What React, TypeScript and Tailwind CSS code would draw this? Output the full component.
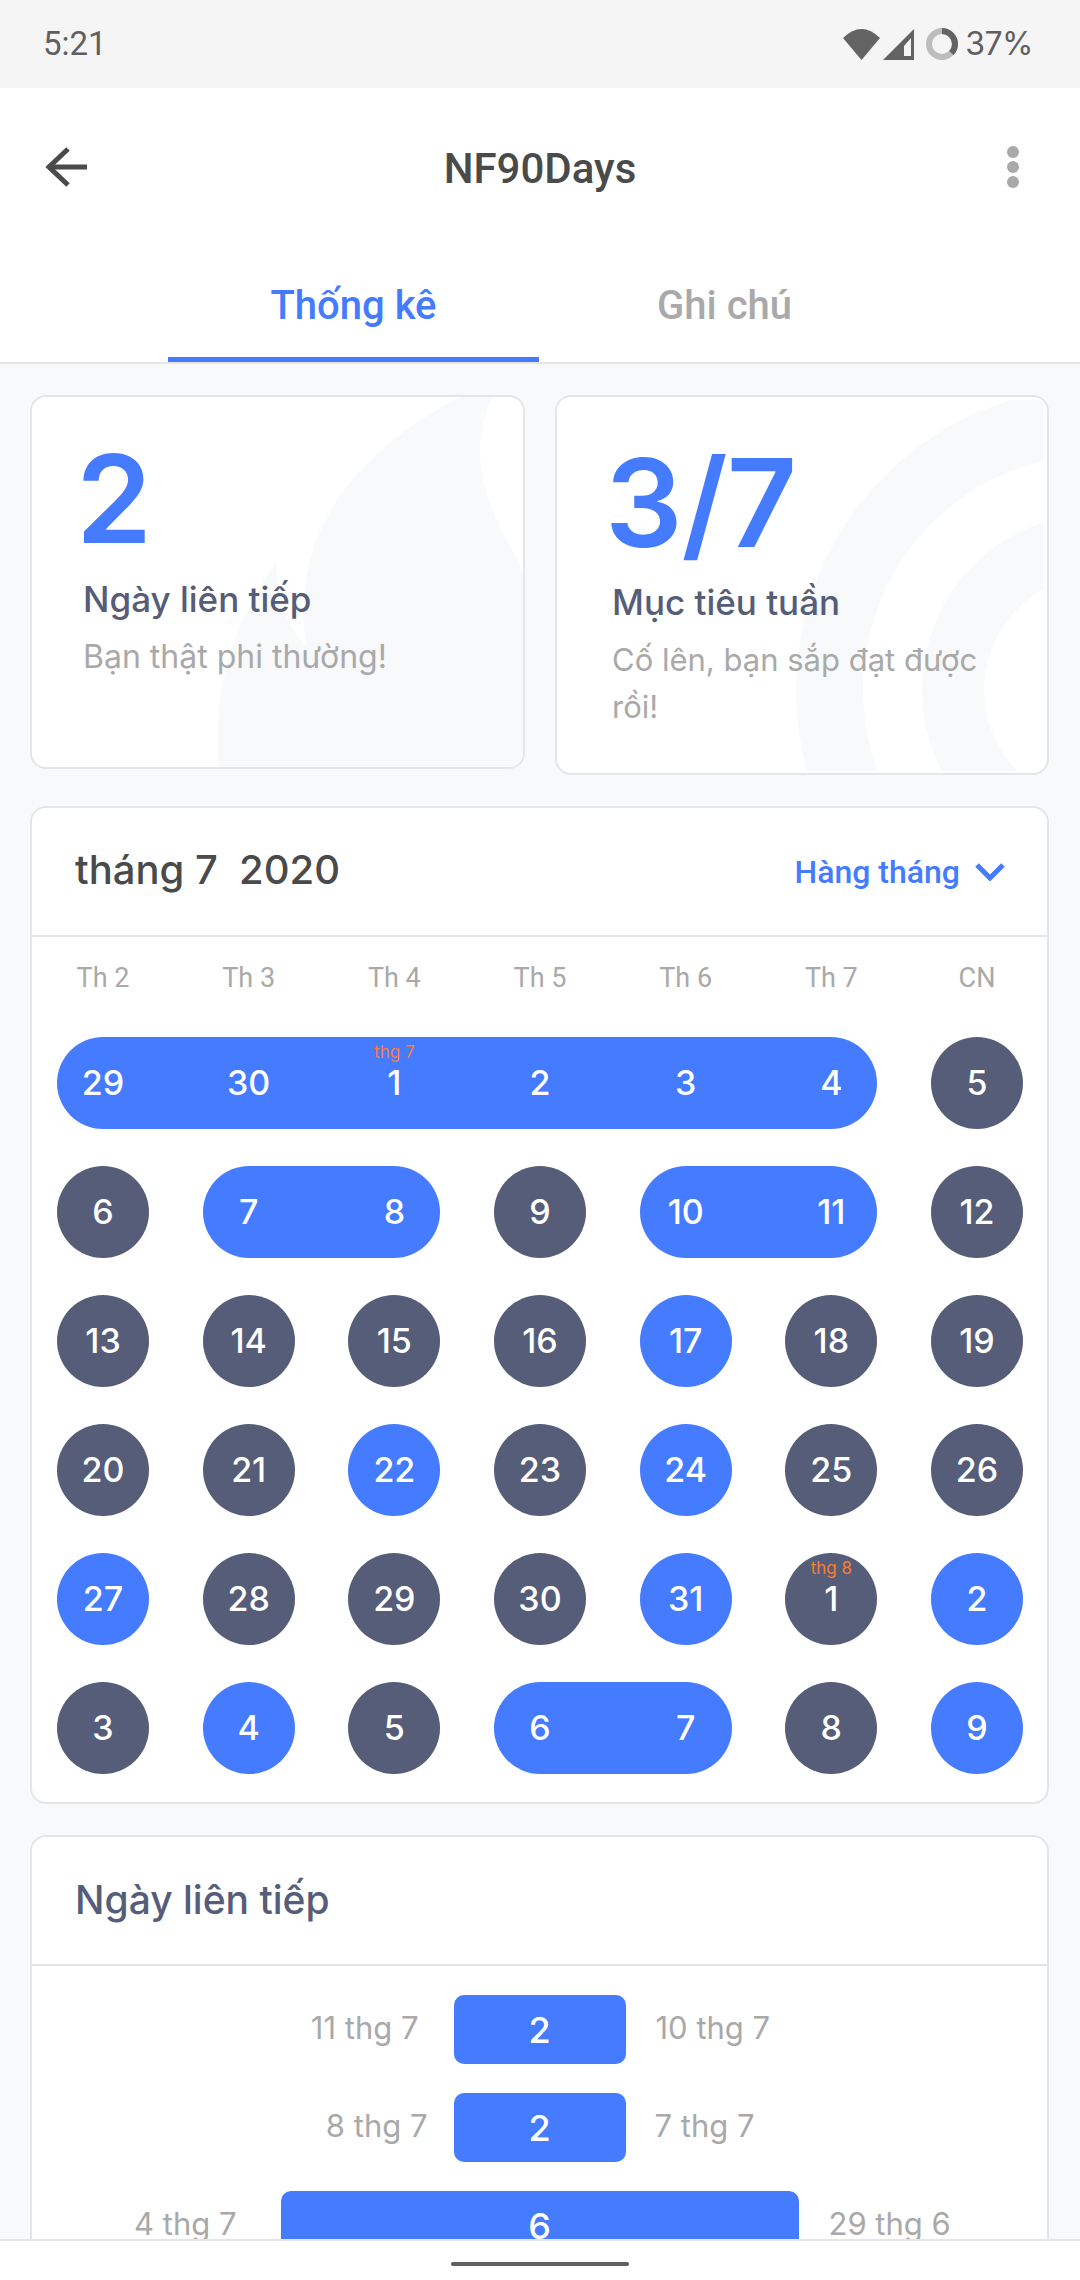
import React from "react";

type Seg = { days: (number | [number, string])[]; blue?: boolean };

const spans: Record<number, string> = { 1: "col-span-1", 2: "col-span-2", 6: "col-span-6" };

const weeks: Seg[][] = [
  [{ days: [29, 30, [1, "thg 7"], 2, 3, 4], blue: true }, { days: [5] }],
  [{ days: [6] }, { days: [7, 8], blue: true }, { days: [9] }, { days: [10, 11], blue: true }, { days: [12] }],
  [{ days: [13] }, { days: [14] }, { days: [15] }, { days: [16] }, { days: [17], blue: true }, { days: [18] }, { days: [19] }],
  [{ days: [20] }, { days: [21] }, { days: [22], blue: true }, { days: [23] }, { days: [24], blue: true }, { days: [25] }, { days: [26] }],
  [{ days: [27], blue: true }, { days: [28] }, { days: [29] }, { days: [30] }, { days: [31], blue: true }, { days: [[1, "thg 8"]] }, { days: [2], blue: true }],
  [{ days: [3] }, { days: [4], blue: true }, { days: [5] }, { days: [6, 7], blue: true }, { days: [8] }, { days: [9], blue: true }],
];

const weekdays = ["Th 2", "Th 3", "Th 4", "Th 5", "Th 6", "Th 7", "CN"];

const streaks = [
  { from: "11 thg 7", to: "10 thg 7", n: 2, w: "w-[172px]", pl: "pr-[35px]", pr: "pl-[30px]" },
  { from: "8 thg 7", to: "7 thg 7", n: 2, w: "w-[172px]", pl: "pr-[26px]", pr: "pl-[29px]" },
  { from: "4 thg 7", to: "29 thg 6", n: 6, w: "w-[518px]", pl: "pr-[44px]", pr: "pl-[30px]" },
];

const Flame = () => (
  <svg className="absolute inset-0 h-full w-full" viewBox="0 0 490 370" preserveAspectRatio="none">
    <path
      d="M427 0C370 30 310 75 284 143C270 180 268 215 274 250C258 232 243 205 244 165C210 215 180 270 186 371L490 371L490 175C470 135 447 100 447 53C447 35 452 18 459 0Z"
      fill="#f8f9fb"
    />
  </svg>
);

const Rings = () => (
  <svg className="absolute left-0 top-[3px]" width="487" height="371" viewBox="0 0 487 371" fill="none">
    <circle cx="542" cy="290" r="269.5" stroke="#f8f9fb" strokeWidth="67" />
    <circle cx="542" cy="290" r="146" stroke="#f8f9fb" strokeWidth="62" />
  </svg>
);

const StatusBar = () => (
  <div className="flex h-[88px] items-center justify-between bg-[#f5f5f5] pl-[43px] pr-[47px] text-[#5f5f5f]">
    <span className="font-['Roboto',sans-serif] text-[33px]">5:21</span>
    <div className="flex items-center">
      <svg width="37" height="31" viewBox="0 0 37 31" fill="#636363">
        <path d="M0 9Q18.5 -9 37 9L18.5 31Z" />
      </svg>
      <svg className="ml-[3px]" width="31" height="31" viewBox="0 0 31 31" fill="#636363">
        <path d="M0 31L31 0V31Z" />
        <path d="M21 17L28 9V27H21Z" fill="#f5f5f5" />
      </svg>
      <svg className="ml-[12px]" width="32" height="32" viewBox="0 0 32 32" fill="none">
        <circle cx="16" cy="16" r="13" stroke="#bdbdbd" strokeWidth="6" />
        <circle cx="16" cy="16" r="13" stroke="#636363" strokeWidth="6" strokeDasharray="30.2 81.7" transform="rotate(-90 16 16)" />
      </svg>
      <span className="ml-[7px] font-['Inter',sans-serif] text-[32px] leading-none tracking-[-0.5px]">37%</span>
    </div>
  </div>
);

const Header = () => (
  <div className="bg-white">
    <div className="grid h-[161px] grid-cols-[1fr_auto_1fr] items-center px-[44px]">
      <svg className="mb-[4px]" width="44" height="40" viewBox="0 0 44 40" fill="none" stroke="#4a4a4a" strokeWidth="5">
        <path d="M43 20H5" />
        <path d="M24 2L5 20L24 38" />
      </svg>
      <span className="font-['Roboto',sans-serif] text-[42px] font-medium text-[#4a4a4a]">NF90Days</span>
      <div className="mb-[4px] mr-[17px] flex flex-col items-end gap-[3px]">
        <div className="h-[12px] w-[12px] rounded-full bg-[#a9a9a9]" />
        <div className="h-[12px] w-[12px] rounded-full bg-[#a9a9a9]" />
        <div className="h-[12px] w-[12px] rounded-full bg-[#a9a9a9]" />
      </div>
    </div>
    <div className="flex justify-center border-b-2 border-[#e4e5e7] pr-[2px]">
      <div className="flex h-[113px] w-[371px] items-center justify-center border-b-[5px] border-[#447bff] pt-[5px] font-['Roboto',sans-serif] text-[40px] font-medium text-[#447bff]">
        Thống kê
      </div>
      <div className="flex h-[113px] w-[371px] items-center justify-center font-['Roboto',sans-serif] text-[40px] font-medium text-[#a9a9a9]">
        Ghi chú
      </div>
    </div>
  </div>
);

const Day = ({ d }: { d: number | [number, string] }) => {
  const n = Array.isArray(d) ? d[0] : d;
  const note = Array.isArray(d) ? d[1] : null;
  return (
    <div className="relative flex h-[92px] w-[92px] items-center justify-center pb-[2px] font-['Inter',sans-serif] text-[34px] font-medium text-white">
      {note && (
        <span className="absolute left-0 right-0 top-[5px] text-center text-[17px] font-normal leading-[20px] text-[#f97f2e]">
          {note}
        </span>
      )}
      {n}
    </div>
  );
};

const Calendar = () => (
  <div className="shrink-0 rounded-[16px] border-2 border-[#e4e5e7] bg-white">
    <div className="flex h-[129px] items-center justify-between border-b-2 border-[#e4e5e7] pl-[43px] pr-[42px]">
      <span className="mb-[3px] whitespace-pre font-['Inter',sans-serif] text-[40px] font-medium text-[#4a4a4a]">tháng 7  2020</span>
      <div className="flex items-center gap-[15px] text-[#447bff]">
        <span className="font-['Roboto',sans-serif] text-[32px] font-medium">Hàng tháng</span>
        <svg width="30" height="18" viewBox="0 0 30 18" fill="none" stroke="#447bff" strokeWidth="5">
          <path d="M2 2L15 15L28 2" />
        </svg>
      </div>
    </div>
    <div className="pb-[28px] pl-[25px] pr-[24px]">
      <div className="grid h-[100px] grid-cols-7 items-center gap-x-[53.67px] pb-[17px]">
        {weekdays.map((w) => (
          <span key={w} className="text-center font-['Roboto',sans-serif] text-[27px] text-[#a9a9a9]">
            {w}
          </span>
        ))}
      </div>
      <div className="flex flex-col gap-y-[37px]">
        {weeks.map((week, i) => (
          <div key={i} className="grid grid-cols-7 gap-x-[53.67px]">
            {week.map((seg, j) => (
              <div
                key={j}
                className={`flex justify-between rounded-full ${spans[seg.days.length]} ${seg.blue ? "bg-[#447bff]" : "bg-[#555d78]"}`}
              >
                {seg.days.map((d, k) => (
                  <Day key={k} d={d} />
                ))}
              </div>
            ))}
          </div>
        ))}
      </div>
    </div>
  </div>
);

const Streaks = () => (
  <div className="shrink-0 rounded-[16px] border-2 border-[#e4e5e7] bg-white">
    <div className="flex h-[129px] items-center border-b-2 border-[#e4e5e7] pl-[43px]">
      <span className="font-['Inter',sans-serif] text-[39px] font-medium text-[#555d78]">Ngày liên tiếp</span>
    </div>
    <div className="flex flex-col gap-y-[29px] pb-[29px] pt-[29px]">
      {streaks.map((s) => (
        <div key={s.from} className="grid grid-cols-[1fr_auto_1fr] items-center">
          <span className={`mb-[3px] text-right font-['Inter',sans-serif] text-[31px] text-[#a9a9a9] ${s.pl}`}>{s.from}</span>
          <div className={`flex h-[69px] items-center justify-center rounded-[10px] bg-[#447bff] font-['Inter',sans-serif] text-[36px] font-medium text-white ${s.w}`}>
            {s.n}
          </div>
          <span className={`mb-[3px] font-['Inter',sans-serif] text-[31px] text-[#a9a9a9] ${s.pr}`}>{s.to}</span>
        </div>
      ))}
    </div>
  </div>
);

const App = () => {
  return (
    <div className="flex h-[2280px] w-[1080px] flex-col overflow-hidden bg-[#f8f9fb]">
      <StatusBar />
      <Header />
      <div className="flex min-h-0 flex-1 flex-col gap-y-[31px] overflow-hidden pl-[30px] pr-[31px] pt-[31px]">
        <div className="flex shrink-0 items-start justify-between">
          <div className="relative h-[374px] w-[495px] overflow-hidden rounded-[16px] border-2 border-[#e4e5e7] bg-white">
            <Flame />
            <div className="relative pl-[51px] pt-[32px]">
              <div className="ml-[-7px] font-['Inter',sans-serif] text-[122px] font-semibold leading-[140px] text-[#447bff]">2</div>
              <div className="mt-[4px] font-['Inter',sans-serif] text-[35px] font-medium text-[#555d78]">Ngày liên tiếp</div>
              <div className="mt-[7px] font-['Inter',sans-serif] text-[32px] text-[#a9a9a9]">Bạn thật phi thường!</div>
            </div>
          </div>
          <div className="relative h-[380px] w-[494px] overflow-hidden rounded-[16px] border-2 border-[#e4e5e7] bg-white">
            <Rings />
            <div className="relative pl-[55px] pr-[40px] pt-[36px]">
              <div className="ml-[-7px] font-['Inter',sans-serif] text-[122px] font-semibold leading-[140px] tracking-[-1px] text-[#447bff]">3/7</div>
              <div className="mt-[3px] font-['Inter',sans-serif] text-[35px] font-medium text-[#555d78]">Mục tiêu tuần</div>
              <div className="mt-[7px] font-['Inter',sans-serif] text-[31px] leading-[47px] text-[#a9a9a9]">Cố lên, bạn sắp đạt được rồi!</div>
            </div>
          </div>
        </div>
        <Calendar />
        <Streaks />
      </div>
      <div className="flex h-[41px] shrink-0 justify-center border-t-2 border-[#e4e5e7] bg-white pt-[21px]">
        <div className="h-[4px] w-[178px] rounded-full bg-[#5f5f5f]" />
      </div>
    </div>
  );
};

export default App;
